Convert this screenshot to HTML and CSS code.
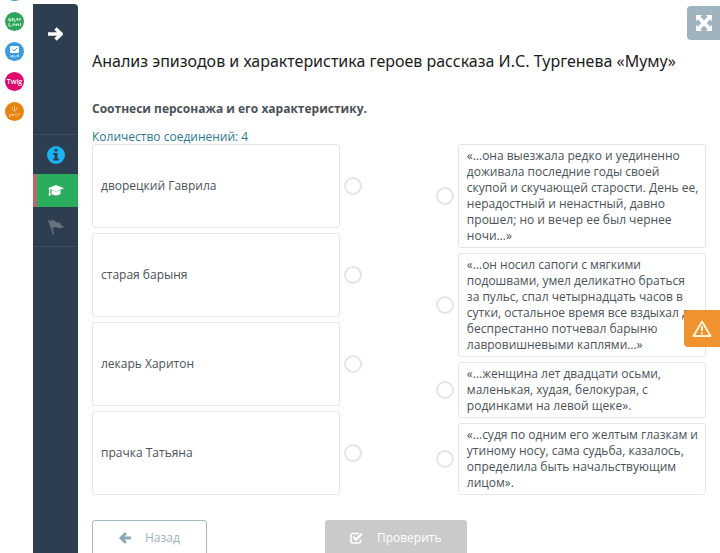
FILE: index.html
```html
<!DOCTYPE html>
<html lang="ru">
<head>
    <meta charset="UTF-8">
    <meta name="viewport" content="width=device-width, initial-scale=1">
    <title>Анализ эпизодов и характеристика героев рассказа И.С. Тургенева «Муму»</title>
    <link rel="stylesheet" href="styles.css">
</head>
<body>
    <div class="page">
        <!-- Сервисы -->
        <nav class="services" aria-label="Сервисы">
            <a href="#" class="service service-blue" aria-label="Сервис"></a>
            <a href="#" class="service service-green" aria-label="BilimLand">
                <svg viewBox="0 0 19 19" fill="none" stroke="#c9f0d6">
                    <path d="M4 6v3h2V7H4M7.500 6v3M9 6v3h2M12 9V6l1.500 2L15 6v3"/>
                    <path d="M4 11v3h2.500M8 14v-2h2v2M11.500 14v-2h2v2M15.500 11v3"/>
                </svg>
            </a>
            <a href="#" class="service service-blue" aria-label="Тесты">
                <svg viewBox="0 0 19 19" fill="none">
                    <rect x="5" y="4" width="9" height="7" rx="1" fill="#fff"/>
                    <path d="M7.500 7.500l1.500 1.500 3-3" stroke="#3c9be0"/>
                    <path d="M6 13v2h1.500v-2M9 13v2h1.500M12 15v-2h1.500v2" stroke="#b5dcf7"/>
                </svg>
            </a>
            <a href="#" class="service service-pink">Twig</a>
            <a href="#" class="service service-orange" aria-label="Энергия">
                <svg viewBox="0 0 19 19" fill="none" stroke="#fbc98c">
                    <path d="M9.500 3.500v5M7.500 5.500v2l2 2 2-2v-2"/>
                    <path d="M4 12.500h2M4 14h2M7 14v-2l1.500 2v-2M10 12h1.500M10 14h1.500M13 14v-2h2"/>
                </svg>
            </a>
        </nav>

        <!-- Меню урока -->
        <aside class="sidebar">
            <button type="button" class="sidebar-toggle" aria-label="Развернуть меню">
                <svg viewBox="0 0 16 14" fill="none" stroke="#fff" stroke-width="3.500">
                    <path d="M0 7h13"/>
                    <path d="M7.500 1.500l5.800 5.500-5.800 5.500" stroke-linejoin="round"/>
                </svg>
            </button>
            <nav class="steps" aria-label="Этапы урока">
                <a href="#" class="step" aria-label="Информация">
                    <svg width="18" height="18" viewBox="0 0 18 18">
                        <circle cx="9" cy="9" r="9" fill="#1ab2f5"/>
                        <path d="M7.500 3h3v2.500h-3zM6.300 7h4.200v5.500h1.300v2H6.300v-2h1.300V9H6.300z" fill="#2b3e50"/>
                    </svg>
                </a>
                <a href="#" class="step active" aria-label="Упражнения">
                    <svg width="16" height="12" viewBox="0 0 16 12" fill="#fff">
                        <path d="M8 0l8 3.200-8 3.200-8-3.200z"/>
                        <path d="M3.500 5L8 6.800l4.500-1.800v3.800C11.500 10 10 10.500 8 10.500s-3.500-.5-4.500-1.700z"/>
                        <path d="M1 4h1.200v3.500l.8 3H.5l.6-3z"/>
                    </svg>
                </a>
                <a href="#" class="step" aria-label="Итог">
                    <svg width="16" height="16" viewBox="0 0 16 16" fill="#66727e">
                        <path d="M0 1.500L1.200.8 6.300 14.800 4.900 15.500z"/>
                        <path d="M1.500 2.300C4 .5 6 1.200 7.500 2.600s3 1.200 4.200.4L13 6l3 1.500c-2.500 2-4.500 2.100-6.200 1.300S6.500 8 4.200 9.600z"/>
                    </svg>
                </a>
            </nav>
        </aside>

        <main class="content">
            <h1>Анализ эпизодов и характеристика героев рассказа И.С. Тургенева «Муму»</h1>
            <h2>Соотнеси персонажа и его характеристику.</h2>
            <p class="counter">Количество соединений: 4</p>

            <div class="match">
                <div class="heroes">
                    <div class="pair">
                        <div class="card">дворецкий Гаврила</div>
                        <button type="button" class="dot" aria-label="Соединить: дворецкий Гаврила"></button>
                    </div>
                    <div class="pair">
                        <div class="card">старая барыня</div>
                        <button type="button" class="dot" aria-label="Соединить: старая барыня"></button>
                    </div>
                    <div class="pair">
                        <div class="card">лекарь Харитон</div>
                        <button type="button" class="dot" aria-label="Соединить: лекарь Харитон"></button>
                    </div>
                    <div class="pair">
                        <div class="card">прачка Татьяна</div>
                        <button type="button" class="dot" aria-label="Соединить: прачка Татьяна"></button>
                    </div>
                </div>

                <div class="quotes">
                    <div class="pair">
                        <button type="button" class="dot" aria-label="Соединить с цитатой 1"></button>
                        <div class="card">«…она выезжала редко и уединенно доживала последние годы своей скупой и скучающей старости. День ее, нерадостный и ненастный, давно прошел; но и вечер ее был чернее ночи…»</div>
                    </div>
                    <div class="pair">
                        <button type="button" class="dot" aria-label="Соединить с цитатой 2"></button>
                        <div class="card">«…он носил сапоги с мягкими подошвами, умел деликатно браться за пульс, спал четырнадцать часов в сутки, остальное время все вздыхал да беспрестанно потчевал барыню лавровишневыми каплями…»</div>
                    </div>
                    <div class="pair">
                        <button type="button" class="dot" aria-label="Соединить с цитатой 3"></button>
                        <div class="card">«…женщина лет двадцати осьми, маленькая, худая, белокурая, с родинками на левой щеке».</div>
                    </div>
                    <div class="pair">
                        <button type="button" class="dot" aria-label="Соединить с цитатой 4"></button>
                        <div class="card">«…судя по одним его желтым глазкам и утиному носу, сама судьба, казалось, определила быть начальствующим лицом».</div>
                    </div>
                </div>
            </div>

            <div class="actions">
                <button type="button" class="btn btn-back">
                    <svg width="12" height="12" viewBox="0 0 12 12" fill="none" stroke="#8aa9b7" stroke-width="3">
                        <path d="M12 6H2.500M6.800 1.200L2 6l4.800 4.800"/>
                    </svg>
                    Назад
                </button>
                <button type="button" class="btn btn-check" disabled>
                    <svg width="13" height="12" viewBox="0 0 13 12" fill="none" stroke="#fff">
                        <path d="M9 1.500H2.500a1.500 1.500 0 0 0-1.500 1.500v6.500a1.500 1.500 0 0 0 1.500 1.500h6.500a1.500 1.500 0 0 0 1.500-1.500V7.500" stroke-width="1.500"/>
                        <path d="M3.500 5l2.500 2.700L12 1.700" stroke-width="2.200"/>
                    </svg>
                    Проверить
                </button>
            </div>
        </main>
    </div>

    <button type="button" class="fullscreen" aria-label="На весь экран">
        <svg width="16" height="16" viewBox="0 0 16 16" fill="#fff">
            <path d="M0 0h6L4.200 1.800 8 5.600l3.800-3.800L10 0h6v6l-1.800-1.800L10.400 8l3.800 3.800L16 10v6h-6l1.800-1.800L8 10.400l-3.800 3.800L6 16H0v-6l1.800 1.800L5.600 8 1.800 4.200 0 6z" stroke="#fff" stroke-width="0.500"/>
        </svg>
    </button>

    <button type="button" class="report" aria-label="Сообщить об ошибке">
        <svg width="20" height="18" viewBox="0 0 20 18" fill="none" stroke="#fff3dc">
            <path d="M10 1.500L18.500 16h-17z" stroke-width="2" stroke-linejoin="round"/>
            <path d="M10 6v5M10 12.200v2" stroke-width="2"/>
        </svg>
    </button>
</body>
</html>
```

FILE: styles.css
```css
* {
    box-sizing: border-box;
}

body {
    margin: 0;
    background: #fff;
    color: #4a5258;
    font-family: "Open Sans", "Noto Sans", sans-serif;
    font-size: 12px;
    line-height: 16px;
}

button {
    padding: 0;
    border: none;
    font: inherit;
    cursor: pointer;
}

svg {
    display: block;
}

.page {
    display: flex;
    height: 100vh;
    overflow: hidden;
}

/* Сервисы */
.services {
    display: flex;
    flex-direction: column;
    flex: none;
    gap: 11px;
    width: 33px;
    margin-top: -18px;
    padding-left: 5px;
}

.service {
    display: flex;
    align-items: center;
    justify-content: center;
    flex: none;
    width: 19px;
    height: 19px;
    border-radius: 50%;
    color: #fff;
    font-size: 7px;
    font-weight: 600;
    text-decoration: none;
}

.service svg {
    width: 19px;
    height: 19px;
}

.service-green {
    background: #2fa45c;
}

.service-blue {
    background: #3c9be0;
}

.service-pink {
    background: #de0a6c;
}

.service-orange {
    background: #e8820e;
}

/* Меню урока */
.sidebar {
    flex: none;
    width: 45px;
    margin-top: 4px;
    background: #2d3e50;
    border-radius: 0 4px 0 0;
}

.sidebar-toggle {
    display: flex;
    align-items: center;
    justify-content: center;
    width: 100%;
    height: 60px;
    margin-bottom: 70px;
    background: none;
}

.sidebar-toggle svg {
    width: 16px;
    height: 14px;
}

.steps {
    display: flex;
    flex-direction: column;
    gap: 3px;
    padding: 3px 0;
    border-top: 1px solid #3e4e5f;
    border-bottom: 1px solid #3e4e5f;
}

.step {
    display: flex;
    align-items: center;
    justify-content: center;
    height: 33px;
    padding-right: 3px;
    border-left: 4px solid transparent;
}

.step.active {
    background: #2bad5e;
    border-left-color: #b8686c;
}

/* Задание */
.content {
    flex: 1;
    min-width: 0;
    padding: 49px 14px 0;
}

h1 {
    margin: 0 0 28px;
    color: #1c1c1c;
    font-family: "Noto Sans", "Open Sans", sans-serif;
    font-size: 16px;
    font-weight: 400;
    line-height: 24px;
}

h2 {
    margin: 0 0 12px;
    font-size: 12px;
    font-weight: 700;
    line-height: 16px;
}

.counter {
    margin: 0;
    color: #2a7892;
    line-height: 15px;
}

.match {
    display: flex;
    justify-content: space-between;
}

.heroes,
.quotes {
    display: flex;
    flex-direction: column;
    gap: 5px;
    width: 44%;
}

.pair {
    display: flex;
    align-items: center;
    gap: 4px;
}

.heroes .pair {
    flex: 1;
}

.card {
    display: flex;
    align-items: center;
    align-self: stretch;
    flex: 1;
    padding: 3px 6px 3px 8px;
    border: 1px solid #e4e6e7;
    border-radius: 3px;
}

.dot {
    flex: none;
    width: 18px;
    height: 18px;
    background: #fff;
    border: 2px solid #e3e5e6;
    border-radius: 50%;
}

.actions {
    display: flex;
    gap: 118px;
    margin-top: 25px;
}

.btn {
    display: flex;
    align-items: center;
    justify-content: center;
    height: 36px;
    border-radius: 3px;
}

.btn-back {
    gap: 14px;
    padding: 0 26px;
    background: #fff;
    border: 1px solid #a3b9c3;
    color: #9db4bf;
}

.btn-check {
    gap: 14px;
    padding: 0 25px;
    background: #cacaca;
    color: #fff;
    cursor: default;
}

/* Кнопки у правого края */
.fullscreen {
    position: fixed;
    top: 6px;
    right: 0;
    display: flex;
    align-items: center;
    justify-content: center;
    width: 33px;
    height: 34px;
    background: #9fb3be;
    border-radius: 4px 0 0 4px;
}

.report {
    position: fixed;
    top: 310px;
    right: 0;
    display: flex;
    align-items: center;
    justify-content: center;
    width: 36px;
    height: 37px;
    background: #f0922e;
    border-radius: 4px 0 0 4px;
}
```
